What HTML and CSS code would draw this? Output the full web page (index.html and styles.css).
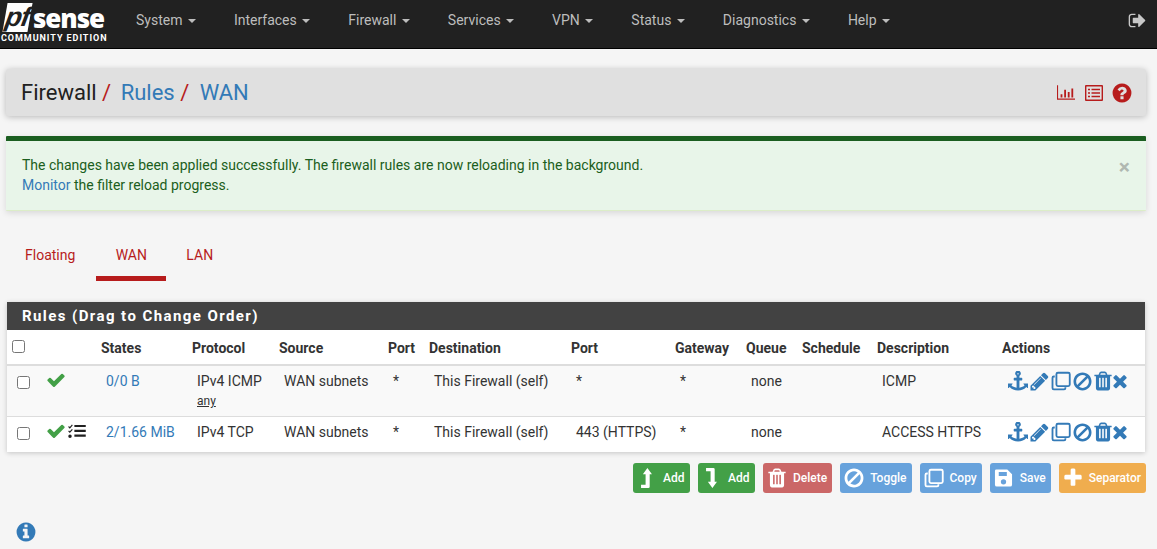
FILE: index.html
```html
<!DOCTYPE html>
<html lang="en">
<head>
<meta charset="utf-8">
<title>Firewall: Rules: WAN</title>
<link rel="stylesheet" href="styles.css">
</head>
<body>
<svg class="defs" width="0" height="0" aria-hidden="true">
  <symbol id="i-check" viewBox="0 0 1792 1792"><path d="M1671 566q0 40-28 68l-724 724-136 136q-28 28-68 28t-68-28l-136-136-362-362q-28-28-28-68t28-68l136-136q28-28 68-28t68 28l294 295 656-657q28-28 68-28t68 28l136 136q28 28 28 68z"/></symbol>
  <symbol id="i-times" viewBox="0 0 1792 1792"><path d="M1490 1322q0 40-28 68l-136 136q-28 28-68 28t-68-28l-294-294-294 294q-28 28-68 28t-68-28l-136-136q-28-28-28-68t28-68l294-294-294-294q-28-28-28-68t28-68l136-136q28-28 68-28t68 28l294 294 294-294q28-28 68-28t68 28l136 136q28 28 28 68t-28 68l-294 294 294 294q28 28 28 68z"/></symbol>
  <symbol id="i-pencil" viewBox="0 0 1792 1792"><path d="M491 1536l91-91-235-235-91 91v107h128v128h107zm523-928q0-22-22-22-10 0-17 7l-542 542q-7 7-7 17 0 22 22 22 10 0 17-7l542-542q7-7 7-17zm-54-192l416 416-832 832h-416v-416zm683 96q0 53-37 90l-166 166-416-416 166-165q36-38 90-38 53 0 91 38l235 234q37 39 37 91z"/></symbol>
  <symbol id="i-ban" viewBox="0 0 1792 1792"><path d="M1440 893q0-161-87-295l-754 753q137 89 297 89 111 0 211.5-43.5t173.5-116.5 116-174.5 43-212.5zm-999 299l755-754q-135-91-300-91-148 0-273 73t-198 199-73 274q0 162 89 299zm1223-299q0 157-61 300t-163.5 246-245 164-298.5 61-298.5-61-245-164-163.5-246-61-300 61-299.5 163.5-245.5 245-164 298.5-61 298.5 61 245 164 163.5 245.5 61 299.5z"/></symbol>
  <symbol id="i-trash" viewBox="0 0 1792 1792"><path d="M704 1376v-704q0-14-9-23t-23-9h-64q-14 0-23 9t-9 23v704q0 14 9 23t23 9h64q14 0 23-9t9-23zm256 0v-704q0-14-9-23t-23-9h-64q-14 0-23 9t-9 23v704q0 14 9 23t23 9h64q14 0 23-9t9-23zm256 0v-704q0-14-9-23t-23-9h-64q-14 0-23 9t-9 23v704q0 14 9 23t23 9h64q14 0 23-9t9-23zm-544-992h448l-48-117q-7-9-17-11h-317q-10 2-17 11zm928 32v64q0 14-9 23t-23 9h-96v948q0 83-47 143.5t-113 60.5h-832q-66 0-113-58.5t-47-141.5v-952h-96q-14 0-23-9t-9-23v-64q0-14 9-23t23-9h309l70-167q15-37 54-63t79-26h320q40 0 79 26t54 63l70 167h309q14 0 23 9t9 23z"/></symbol>
  <symbol id="i-clone" viewBox="0 0 24 24"><rect x="6.500" y="2.100" width="16" height="16" rx="1.800" fill="none" stroke="currentColor" stroke-width="2.200"/><path d="M4.500 5.500v2.200H3.400a.5.500 0 0 0-.5.500v12.300a.5.500 0 0 0 .5.500h12.300a.5.500 0 0 0 .5-.5v-1h2.200v1a2.700 2.700 0 0 1-2.700 2.700H3.400A2.700 2.700 0 0 1 .7 20.500V8.200a2.700 2.700 0 0 1 2.700-2.700z"/></symbol>
  <symbol id="i-anchor" viewBox="0 0 1792 1792"><path d="M960 256q0-26-19-45t-45-19-45 19-19 45 19 45 45 19 45-19 19-45zm832 888v352q0 22-20 30-8 2-12 2-12 0-23-9l-93-93q-119 143-318.500 226.500t-429.500 83.500-429.500-83.500-318.500-226.500l-93 93q-9 9-23 9-4 0-12-2-20-8-20-30v-352q0-14 9-23t23-9h352q22 0 30 20 8 19-7 35l-100 100q67 91 189.500 153.500t271.500 82.500v-647h-192q-26 0-45-19t-19-45v-128q0-26 19-45t45-19h192v-163q-58-34-93-92.500t-35-128.500q0-106 75-181t181-75 181 75 75 181q0 70-35 128.500t-93 92.500v163h192q26 0 45 19t19 45v128q0 26-19 45t-45 19h-192v647q149-20 271.500-82.500t189.500-153.500l-100-100q-15-16-7-35 8-20 30-20h352q14 0 23 9t9 23z"/></symbol>
  <symbol id="i-question" viewBox="0 0 1792 1792"><path d="M1024 1376v-192q0-14-9-23t-23-9h-192q-14 0-23 9t-9 23v192q0 14 9 23t23 9h192q14 0 23-9t9-23zm256-672q0-88-55.500-163t-138.500-116-170-41q-243 0-371 213-15 24 8 42l132 100q7 6 19 6 16 0 25-12 53-68 86-92 34-24 86-24 48 0 85.500 26t37.500 59q0 38-20 61t-68 45q-63 28-115.500 86.500t-52.500 125.500v36q0 14 9 23t23 9h192q14 0 23-9t9-23q0-19 21.500-49.500t54.500-49.500q32-18 49-28.500t46-35 44.500-48 28-60.500 12.500-81zm384 192q0 209-103 385.500t-279.500 279.500-385.500 103-385.500-103-279.500-279.500-103-385.500 103-385.500 279.500-279.500 385.500-103 385.500 103 279.500 279.500 103 385.500z"/></symbol>
  <symbol id="i-info" viewBox="0 0 1792 1792"><path d="M1152 1376v-160q0-14-9-23t-23-9h-96v-512q0-14-9-23t-23-9h-320q-14 0-23 9t-9 23v160q0 14 9 23t23 9h96v320h-96q-14 0-23 9t-9 23v160q0 14 9 23t23 9h448q14 0 23-9t9-23zm-128-896v-160q0-14-9-23t-23-9h-192q-14 0-23 9t-9 23v160q0 14 9 23t23 9h192q14 0 23-9t9-23zm640 416q0 209-103 385.500t-279.500 279.500-385.500 103-385.500-103-279.500-279.500-103-385.500 103-385.500 279.500-279.500 385.500-103 385.500 103 279.500 279.500 103 385.500z"/></symbol>
  <symbol id="i-signout" viewBox="0 0 1792 1792"><path d="M704 1440q0 4 1 20t.5 26.500-3 23.500-10 19.500-20.500 6.500h-320q-119 0-203.500-84.500t-84.500-203.500v-704q0-119 84.500-203.500t203.500-84.500h320q13 0 22.500 9.500t9.500 22.500q0 4 1 20t.5 26.500-3 23.500-10 19.500-20.500 6.500h-320q-66 0-113 47t-47 113v704q0 66 47 113t113 47h312l11.500 1 11.500 3 8 5.500 7 9 2 13.500zm928-544q0 26-19 45l-544 544q-19 19-45 19t-45-19-19-45v-288h-448q-26 0-45-19t-19-45v-384q0-26 19-45t45-19h448v-288q0-26 19-45t45-19 45 19l544 544q19 19 19 45z"/></symbol>
  <symbol id="i-plus" viewBox="0 0 1792 1792"><path d="M1600 736v192q0 40-28 68t-68 28h-416v416q0 40-28 68t-68 28h-192q-40 0-68-28t-28-68v-416h-416q-40 0-68-28t-28-68v-192q0-40 28-68t68-28h416v-416q0-40 28-68t68-28h192q40 0 68 28t28 68v416h416q40 0 68 28t28 68z"/></symbol>
  <symbol id="i-listalt" viewBox="0 0 18 16"><path fill-rule="evenodd" d="M1 0h16a1 1 0 0 1 1 1v14a1 1 0 0 1-1 1H1a1 1 0 0 1-1-1V1a1 1 0 0 1 1-1zm.4 1.400v13.200h15.200V1.400z"/><path d="M3 3.700h2v1.500H3zM6.500 3.700H15v1.500H6.500zM3 7.200h2v1.500H3zM6.500 7.200H15v1.500H6.500zM3 10.700h2v1.500H3zM6.500 10.700H15v1.500H6.500z"/></symbol>
  <symbol id="i-chart" viewBox="0 0 20 16"><path d="M0 0h1.200v14.600H20V16H0z"/><path d="M4 10h2v3.500H4zM8 5h2v8.500H8zM12 7.500h2v6h-2zM16 3.500h2v10h-2z"/></symbol>
  <symbol id="i-save" viewBox="0 0 20 20"><path fill-rule="evenodd" d="M2.500 1H14l5 5v11a2 2 0 0 1-2 2H3a2 2 0 0 1-2-2V2.500A1.500 1.500 0 0 1 2.500 1zM5 3.800v4h8.500v-4zM10 11.200a2.800 2.800 0 1 0 0 5.600 2.800 2.800 0 0 0 0-5.600z"/></symbol>
  <symbol id="i-levelup" viewBox="0 0 12 22"><path d="M7 0l5 7H9.500v13.500A1.500 1.500 0 0 1 8 22H0v-3.500h5V7H2z"/></symbol>
  <symbol id="i-leveldown" viewBox="0 0 12 22"><path d="M0 0h8a1.500 1.500 0 0 1 1.500 1.500V15H12l-5 7-5-7h3V3.500H0z"/></symbol>
  <symbol id="i-tasks" viewBox="0 0 20 16"><path d="M.8 2.300l1 1L4.200.6l1 .9-3.400 3.800L-.1 3.300zM.8 7.300l1 1 2.400-2.700 1 .9-3.400 3.800-1.900-2zM2 12a2 2 0 1 1 0 4 2 2 0 0 1 0-4zM7 1h13v2.500H7zM7 6.500h13V9H7zM7 12h13v2.500H7z"/></symbol>
</svg>

<header class="navbar">
  <a class="brand" href="#">
    <span class="brand-top"><span class="brand-pf"><span class="brand-pf-text">pf</span></span><span class="brand-sense">sense</span></span>
    <span class="brand-edition">COMMUNITY EDITION</span>
  </a>
  <nav class="menu">
    <a class="menu-item" href="#">System <span class="caret"></span></a>
    <a class="menu-item" href="#">Interfaces <span class="caret"></span></a>
    <a class="menu-item" href="#">Firewall <span class="caret"></span></a>
    <a class="menu-item" href="#">Services <span class="caret"></span></a>
    <a class="menu-item" href="#">VPN <span class="caret"></span></a>
    <a class="menu-item" href="#">Status <span class="caret"></span></a>
    <a class="menu-item" href="#">Diagnostics <span class="caret"></span></a>
    <a class="menu-item" href="#">Help <span class="caret"></span></a>
  </nav>
  <a class="logout" href="#"><svg class="ic-logout"><use href="#i-signout"/></svg></a>
</header>

<main class="page">
  <div class="crumbs">
    <h1 class="crumb-title">Firewall<span class="slash"> / </span><a class="crumb-link" href="#">Rules</a><span class="slash"> / </span><a class="crumb-link crumb-last" href="#">WAN</a></h1>
    <div class="crumb-icons">
      <svg class="ic-chart"><use href="#i-chart"/></svg>
      <svg class="ic-listalt"><use href="#i-listalt"/></svg>
      <svg class="ic-question"><use href="#i-question"/></svg>
    </div>
  </div>

  <div class="alert">
    <div class="alert-text">The changes have been applied successfully. The firewall rules are now reloading in the background.<br><a href="#">Monitor</a> the filter reload progress.</div>
    <span class="alert-close">×</span>
  </div>

  <div class="tabs">
    <a class="tab" href="#">Floating</a>
    <a class="tab tab-active" href="#">WAN</a>
    <a class="tab" href="#">LAN</a>
  </div>

  <section class="panel">
    <h2 class="panel-title">Rules (Drag to Change Order)</h2>
    <table class="rules">
      <colgroup>
        <col class="c1"><col class="c2"><col class="c3"><col class="c4"><col class="c5"><col class="c6"><col class="c7"><col class="c8"><col class="c9"><col class="c10"><col class="c11"><col class="c12"><col class="c13">
      </colgroup>
      <thead>
        <tr>
          <th><input class="check" type="checkbox"></th>
          <th></th>
          <th>States</th><th>Protocol</th><th>Source</th><th>Port</th><th>Destination</th><th>Port</th><th>Gateway</th><th>Queue</th><th>Schedule</th><th>Description</th><th>Actions</th>
        </tr>
      </thead>
      <tbody>
        <tr class="row-odd">
          <td><input class="check" type="checkbox"></td>
          <td class="status-cell"><svg class="ic-check"><use href="#i-check"/></svg></td>
          <td><a href="#">0/0 B</a></td>
          <td>IPv4 ICMP<a class="sub" href="#">any</a></td>
          <td>WAN subnets</td><td>*</td><td>This Firewall (self)</td><td>*</td><td>*</td><td>none</td><td></td><td>ICMP</td>
          <td class="actions">
            <svg class="ic-a anchor"><use href="#i-anchor"/></svg><svg class="ic-a pencil"><use href="#i-pencil"/></svg><svg class="ic-a clone"><use href="#i-clone"/></svg><svg class="ic-a ban"><use href="#i-ban"/></svg><svg class="ic-a trash"><use href="#i-trash"/></svg><svg class="ic-a times"><use href="#i-times"/></svg>
          </td>
        </tr>
        <tr>
          <td><input class="check" type="checkbox"></td>
          <td class="status-cell"><svg class="ic-check"><use href="#i-check"/></svg><svg class="ic-tasks"><use href="#i-tasks"/></svg></td>
          <td><a href="#">2/1.66 MiB</a></td>
          <td>IPv4 TCP</td>
          <td>WAN subnets</td><td>*</td><td>This Firewall (self)</td><td>443 (HTTPS)</td><td>*</td><td>none</td><td></td><td>ACCESS HTTPS</td>
          <td class="actions">
            <svg class="ic-a anchor"><use href="#i-anchor"/></svg><svg class="ic-a pencil"><use href="#i-pencil"/></svg><svg class="ic-a clone"><use href="#i-clone"/></svg><svg class="ic-a ban"><use href="#i-ban"/></svg><svg class="ic-a trash"><use href="#i-trash"/></svg><svg class="ic-a times"><use href="#i-times"/></svg>
          </td>
        </tr>
      </tbody>
    </table>
  </section>

  <div class="buttons">
    <a class="btn btn-green" href="#"><span class="btn-ic"><svg class="ic-level"><use href="#i-levelup"/></svg></span>Add</a>
    <a class="btn btn-green" href="#"><span class="btn-ic"><svg class="ic-level"><use href="#i-leveldown"/></svg></span>Add</a>
    <a class="btn btn-red" href="#"><span class="btn-ic"><svg class="ic-btn"><use href="#i-trash"/></svg></span>Delete</a>
    <a class="btn btn-blue" href="#"><span class="btn-ic"><svg class="ic-btn"><use href="#i-ban"/></svg></span>Toggle</a>
    <a class="btn btn-blue" href="#"><span class="btn-ic"><svg class="ic-clone-btn"><use href="#i-clone"/></svg></span>Copy</a>
    <a class="btn btn-blue" href="#"><span class="btn-ic"><svg class="ic-save"><use href="#i-save"/></svg></span>Save</a>
    <a class="btn btn-orange" href="#"><span class="btn-ic"><svg class="ic-btn"><use href="#i-plus"/></svg></span>Separator</a>
  </div>

  <svg class="ic-info"><use href="#i-info"/></svg>
</main>
</body>
</html>
```

FILE: styles.css
```css
* { box-sizing: border-box; }
html, body { margin: 0; padding: 0; }
body {
  background: #f5f5f5;
  color: #212121;
  font-family: Roboto, "Liberation Sans", sans-serif;
  font-size: 14px;
  line-height: 20px;
  overflow: hidden;
}
a { color: #337ab7; text-decoration: none; }
svg { display: block; fill: currentColor; }
.defs { position: absolute; }

/* Navbar */
.navbar {
  display: flex;
  align-items: flex-start;
  height: 49px;
  background: #212121;
  border-bottom: 1px solid #000;
}
.brand {
  display: flex;
  flex-direction: column;
  width: 136px;
  padding: 3px 0 0 1px;
  color: #fff;
  flex: none;
  height: 48px;
}
.brand-top { display: flex; align-items: center; height: 29px; padding-left: 4px; }
.brand-pf {
  display: block;
  width: 25px;
  height: 29px;
  background: #fff;
  transform: skewX(-10deg);
  margin-right: 3px;
  text-align: center;
  flex: none;
}
.brand-pf-text {
  display: block;
  color: #212121;
  font: italic 700 27px/28px "Liberation Sans", sans-serif;
  letter-spacing: -1px;
}
.brand-sense {
  font: 800 26px/22px "Open Sans", sans-serif;
  letter-spacing: -1.1px;
  color: #fff;
}
.brand-edition {
  font: 700 9px/10px Roboto, sans-serif;
  letter-spacing: .95px;
  color: #fff;
  white-space: nowrap;
  margin-top: 1px;
}
.menu { display: flex; gap: 38px; margin-top: 10px; }
.menu-item { color: #bdbdbd; white-space: nowrap; }
.caret {
  display: inline-block;
  width: 0;
  height: 0;
  margin-left: 2px;
  vertical-align: middle;
  border-top: 4px solid;
  border-left: 4px solid transparent;
  border-right: 4px solid transparent;
}
.logout { margin: 11px 10px 0 auto; color: #c8c8c8; }
.ic-logout { width: 19px; height: 19px; }

/* Page */
.page { padding: 20px 11px 0 6px; }
.crumbs {
  display: flex;
  align-items: center;
  justify-content: space-between;
  height: 47px;
  padding: 0 13px 0 15px;
  background: #e0e0e0;
  border-radius: 3px;
  box-shadow: 0 1px 6px rgba(0,0,0,.25);
}
.crumb-title {
  margin: 0;
  font-size: 22px;
  line-height: 30px;
  font-weight: 400;
  color: #212121;
  white-space: pre;
}
.crumb-link { padding-left: 4px; }
.crumb-last { padding-left: 5px; }
.slash { color: #b71c1c; }
.crumb-icons { display: flex; align-items: center; color: #b71c1c; gap: 8px; }
.ic-chart { width: 18px; height: 15px; margin-right: 2px; }
.ic-listalt { width: 18px; height: 16px; }
.ic-question { width: 22px; height: 22px; }

.alert {
  display: flex;
  justify-content: space-between;
  margin-top: 20px;
  height: 75px;
  padding: 14px 16px 0 16px;
  background: #e8f5e9;
  border-top: 5px solid #1b5e20;
  border-bottom: 1px solid #dcedc8;
  box-shadow: 0 2px 6px rgba(0,0,0,.12);
  color: #1b5e20;
  border-radius: 1px;
}
.alert-close { color: #b0b8b1; font-size: 21px; font-weight: 700; line-height: 24px; }

.tabs { display: flex; margin-top: 24px; height: 46px; }
.tab {
  padding: 10px 20px 0;
  color: #b71c1c;
  height: 46px;
  border-bottom: 5px solid transparent;
}
.tab:first-child { padding-left: 19px; padding-right: 21px; }
.tab-active { border-bottom-color: #b71c1c; width: 70px; padding: 10px 0 0; text-align: center; }

/* Panel */
.panel {
  margin: 21px 0 0 1px;
  background: #fff;
  box-shadow: 0 1px 5px rgba(0,0,0,.2);
  width: 1138px;
}
.panel-title {
  margin: 0;
  height: 28px;
  padding: 4px 15px;
  background: #424242;
  color: #fff;
  font-size: 15px;
  line-height: 20px;
  font-weight: 700;
  letter-spacing: 1.42px;
}
.rules { width: 1138px; table-layout: fixed; border-collapse: collapse; }
.c1 { width: 30px; } .c2 { width: 59px; } .c3 { width: 91px; } .c4 { width: 87px; }
.c5 { width: 109px; } .c6 { width: 41px; } .c7 { width: 142px; } .c8 { width: 104px; }
.c9 { width: 71px; } .c10 { width: 56px; } .c11 { width: 75px; } .c12 { width: 125px; } .c13 { width: 148px; }
.rules th {
  height: 35px;
  padding: 8px 0 5px 5px;
  text-align: left;
  vertical-align: top;
  font-size: 14px;
  font-weight: 700;
  color: #333;
  border-bottom: 2px solid #ddd;
  white-space: nowrap;
}
.rules td {
  padding: 5px 0 5px 10px;
  vertical-align: top;
  border-bottom: 1px solid #ddd;
  color: #333;
  white-space: nowrap;
  height: 36px;
}
.row-odd td { background: #f9f9f9; height: 51px; }
.rules tbody tr:last-child td { border-bottom: 0; }
.check { display: block; width: 13px; height: 13px; margin: 0; }
.rules td .check { margin-top: 5px; }
.rules th .check { margin-top: 2px; }
.sub { display: block; color: #333; font-size: 12px; line-height: 18px; margin-top: 1px; text-decoration: underline; }
.ic-check { width: 20px; height: 20px; color: #43a047; flex: none; }
.rules td.status-cell { padding: 4px 0 4px 9px; }
.status-cell > svg { display: inline-block; vertical-align: top; }
.ic-tasks { width: 18px; height: 14px; color: #212121; margin: 3px 0 0 2px; }
.actions { font-size: 0; }
.rules td.actions { padding: 5px 0 5px 11px; }
.ic-a { display: inline-block; color: #337ab7; vertical-align: top; }
.anchor { width: 20px; height: 20px; }
.pencil { width: 21px; height: 21px; margin-left: 1px; }
.clone { width: 20px; height: 20px; margin-left: 1px; }
.ban { width: 21px; height: 21px; margin-left: 1px; }
.trash { width: 22px; height: 22px; margin: -1px 0 0 -1px; }
.times { width: 20px; height: 20px; margin-left: -4px; }

/* Buttons */
.buttons { display: flex; justify-content: flex-end; gap: 8px; margin-top: 11px; }
.btn {
  display: flex;
  align-items: center;
  height: 30px;
  padding: 0 5px 0 4px;
  border-radius: 3px;
  color: #fff;
  font-size: 12px;
  font-weight: 500;
  white-space: nowrap;
}
.btn-ic { display: flex; justify-content: center; width: 20px; margin-right: 6px; flex: none; }
.btn-green { background: #43a047; width: 57px; }
.btn-red { background: #cb6767; }
.btn-blue { background: #67a2dc; }
.btn-orange { background: #f0ad4e; }
.ic-level { width: 11px; height: 20px; flex: none; }
.ic-btn { width: 22px; height: 22px; flex: none; }
.ic-clone-btn { width: 20px; height: 20px; flex: none; }
.ic-save { width: 19px; height: 20px; flex: none; }
.ic-info { width: 22px; height: 22px; margin: 28px 0 0 9px; color: #337ab7; }
```
